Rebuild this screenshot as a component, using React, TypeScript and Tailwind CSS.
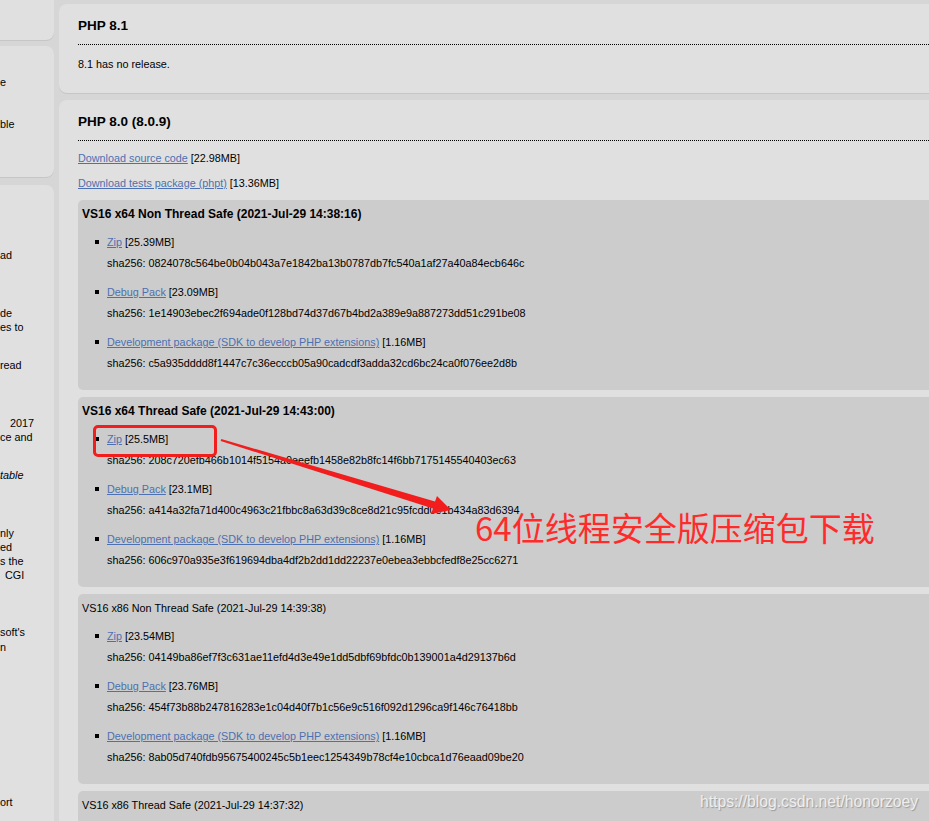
import React from "react";

type Item = { label: string; size: string; sha: string };
type Build = { title: string; bold: boolean; items: Item[] };

const builds: Build[] = [
  {
    title: "VS16 x64 Non Thread Safe (2021-Jul-29 14:38:16)",
    bold: true,
    items: [
      { label: "Zip", size: "[25.39MB]", sha: "0824078c564be0b04b043a7e1842ba13b0787db7fc540a1af27a40a84ecb646c" },
      { label: "Debug Pack", size: "[23.09MB]", sha: "1e14903ebec2f694ade0f128bd74d37d67b4bd2a389e9a887273dd51c291be08" },
      { label: "Development package (SDK to develop PHP extensions)", size: "[1.16MB]", sha: "c5a935dddd8f1447c7c36ecccb05a90cadcdf3adda32cd6bc24ca0f076ee2d8b" },
    ],
  },
  {
    title: "VS16 x64 Thread Safe (2021-Jul-29 14:43:00)",
    bold: true,
    items: [
      { label: "Zip", size: "[25.5MB]", sha: "208c720efb466b1014f5154a0eeefb1458e82b8fc14f6bb7175145540403ec63" },
      { label: "Debug Pack", size: "[23.1MB]", sha: "a414a32fa71d400c4963c21fbbc8a63d39c8ce8d21c95fcdd0e1b434a83d6394" },
      { label: "Development package (SDK to develop PHP extensions)", size: "[1.16MB]", sha: "606c970a935e3f619694dba4df2b2dd1dd22237e0ebea3ebbcfedf8e25cc6271" },
    ],
  },
  {
    title: "VS16 x86 Non Thread Safe (2021-Jul-29 14:39:38)",
    bold: false,
    items: [
      { label: "Zip", size: "[23.54MB]", sha: "04149ba86ef7f3c631ae11efd4d3e49e1dd5dbf69bfdc0b139001a4d29137b6d" },
      { label: "Debug Pack", size: "[23.76MB]", sha: "454f73b88b247816283e1c04d40f7b1c56e9c516f092d1296ca9f146c76418bb" },
      { label: "Development package (SDK to develop PHP extensions)", size: "[1.16MB]", sha: "8ab05d740fdb95675400245c5b1eec1254349b78cf4e10cbca1d76eaad09be20" },
    ],
  },
  {
    title: "VS16 x86 Thread Safe (2021-Jul-29 14:37:32)",
    bold: false,
    items: [],
  },
];

function BuildBox({ b }: { b: Build }) {
  return (
    <div className="shrink-0 rounded-[5px] bg-[#cccccc] pl-[4px] pt-[7px] pb-[20px]">
      <div className={b.bold ? "text-[12px] font-bold leading-[15px]" : "text-[10.8px] leading-[15px]"}>{b.title}</div>
      {b.items.length > 0 && (
        <ul className="mt-[13px] flex flex-col gap-[15px]">
          {b.items.map((it, i) => (
            <li key={i} className="flex flex-col gap-[7px] pl-[25px]">
              <div className="relative leading-[14px]">
                <span className="absolute left-[-12px] top-[5px] h-[4px] w-[4px] bg-black" />
                <a className="text-[#4d70b0] underline">{it.label}</a> {it.size}
              </div>
              <div className="leading-[14px]">sha256: {it.sha}</div>
            </li>
          ))}
        </ul>
      )}
    </div>
  );
}

function SideLine({ t, mt, pl = 0, italic = false }: { t: string; mt: number; pl?: number; italic?: boolean }) {
  return (
    <div
      className={"whitespace-nowrap leading-[14px] " + (italic ? "italic" : "")}
      style={{ marginTop: mt, paddingLeft: pl }}
    >
      {t}
    </div>
  );
}

export default function App() {
  return (
    <div className="relative flex h-[821px] w-[929px] overflow-hidden bg-[#d6d6d6] font-['Liberation_Sans',Arial,sans-serif] text-[10.8px] text-black">
      {/* sidebar */}
      <div className="flex w-[54px] shrink-0 flex-col">
        <div className="h-[40px] shrink-0 rounded-br-[8px] bg-[#e0e0e0] shadow-[0_1px_0_#c6c6c6]" />
        <div className="mt-[6px] h-[131px] shrink-0 overflow-hidden rounded-r-[8px] bg-[#e0e0e0] shadow-[0_1px_0_#c6c6c6]">
          <SideLine t="e" mt={29} pl={0} />
          <SideLine t="ble" mt={28} />
        </div>
        <div className="mt-[8px] flex-1 overflow-hidden rounded-tr-[8px] bg-[#e0e0e0]">
          <SideLine t="ad" mt={63} />
          <SideLine t="de" mt={44} />
          <SideLine t="es to" mt={0} />
          <SideLine t="read" mt={24} />
          <SideLine t="2017" mt={44} pl={10} />
          <SideLine t="ce and" mt={0} />
          <SideLine t="table" mt={24} italic />
          <SideLine t="nly" mt={44} />
          <SideLine t="ed" mt={0} />
          <SideLine t="s the" mt={0} />
          <SideLine t="CGI" mt={0} pl={5} />
          <SideLine t="soft's" mt={43} />
          <SideLine t="n" mt={1} />
          <SideLine t="ort" mt={141} />
        </div>
      </div>

      {/* main */}
      <div className="ml-[5px] flex w-[1000px] shrink-0 flex-col">
        <div className="mt-[4px] h-[89px] shrink-0 rounded-l-[8px] bg-[#e0e0e0] pl-[19px] pt-[13px] shadow-[0_1px_0_#c6c6c6]">
          <h2 className="border-b border-dotted border-black pb-[10px] text-[13.5px] font-bold leading-[17px]">PHP 8.1</h2>
          <p className="mt-[12px] leading-[14px]">8.1 has no release.</p>
        </div>
        <div className="mt-[7px] shrink-0 grow rounded-tl-[8px] bg-[#e0e0e0] pl-[19px] pt-[13px]">
          <h2 className="border-b border-dotted border-black pb-[10px] text-[13.5px] font-bold leading-[17px]">PHP 8.0 (8.0.9)</h2>
          <p className="mt-[10px] leading-[14px]">
            <a className="text-[#4d70b0] underline">Download source code</a> [22.98MB]
          </p>
          <p className="mt-[11px] leading-[14px]">
            <a className="text-[#4d70b0] underline">Download tests package (phpt)</a> [13.36MB]
          </p>
          <div className="mt-[10px] flex flex-col gap-[7px]">
            {builds.map((b, i) => (
              <BuildBox key={i} b={b} />
            ))}
          </div>
        </div>
      </div>

      {/* annotations */}
      <div className="absolute left-[93px] top-[425px] h-[32px] w-[124px] rounded-[5px] border-[3px] border-[#f21d1d]" />
      <svg className="absolute left-0 top-0" width="929" height="821" viewBox="0 0 929 821">
        <polygon
          points="221.3,439 435,501.6 437,496 451,510 431,514 433,508.4 220.7,441"
          fill="#f21d1d"
        />
      </svg>
      <div className="absolute left-[475px] top-[511px] whitespace-nowrap text-[33px] leading-[33px] text-[#ff2b2b] font-['Microsoft_YaHei','Noto_Sans_CJK_SC',sans-serif]">
        64位线程安全版压缩包下载
      </div>
      <div className="absolute left-[700px] top-[794px] whitespace-nowrap text-[15.7px] leading-[16px] text-[#eeeeee] [text-shadow:1px_1px_1px_rgba(0,0,0,0.25)] font-['Liberation_Sans',Arial,sans-serif]">
        https://blog.csdn.net/honorzoey
      </div>
    </div>
  );
}
